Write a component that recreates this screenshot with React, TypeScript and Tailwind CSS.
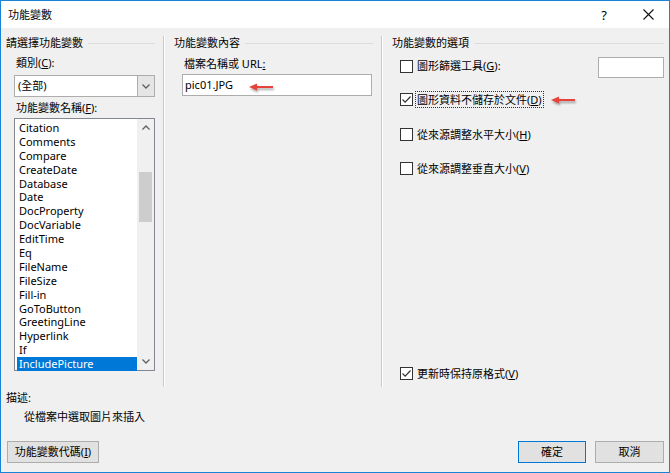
import React from 'react'

const items = [
  'Citation',
  'Comments',
  'Compare',
  'CreateDate',
  'Database',
  'Date',
  'DocProperty',
  'DocVariable',
  'EditTime',
  'Eq',
  'FileName',
  'FileSize',
  'Fill-in',
  'GoToButton',
  'GreetingLine',
  'Hyperlink',
  'If',
  'IncludePicture',
]

function GroupHeader({ title }: { title: string }) {
  return (
    <div className="flex items-center h-[14px] gap-[5px]">
      <span className="whitespace-nowrap">{title}</span>
      <div className="flex-1 h-px bg-[#dcdcdc]" />
    </div>
  )
}

function Key({ k }: { k: string }) {
  return (
    <>
      (<span className="underline underline-offset-1">{k}</span>)
    </>
  )
}

function Check({ checked }: { checked?: boolean }) {
  return (
    <div className="w-[13px] h-[13px] border border-[#333] bg-white flex items-center justify-center shrink-0">
      {checked && (
        <svg width="11" height="11" viewBox="0 0 11 11">
          <path d="M1.5 5.5 L4.2 8.2 L9.5 2.5" fill="none" stroke="#333" strokeWidth="1.2" />
        </svg>
      )}
    </div>
  )
}

function RedArrow() {
  return (
    <svg width="26" height="10" viewBox="0 0 26 10" className="drop-shadow-[1px_2px_1px_rgba(0,0,0,0.35)]">
      <path d="M7 5 H24" stroke="#e8433b" strokeWidth="2" />
      <path d="M0 5 L8 1.5 L8 8.5 Z" fill="#e8433b" />
    </svg>
  )
}

function Chevron({ up }: { up?: boolean }) {
  return (
    <svg width="8" height="5" viewBox="0 0 8 5">
      <path d={up ? 'M0.5 4.5 L4 1 L7.5 4.5' : 'M0.5 0.5 L4 4 L7.5 0.5'} fill="none" stroke="#606060" strokeWidth="1.3" />
    </svg>
  )
}

export default function App() {
  return (
    <div className="w-[670px] h-[473px] border border-[#1883d7] bg-[#f0f0f0] flex flex-col text-[11px] leading-[14px] text-black font-['Noto_Sans','Noto_Sans_CJK_TC',sans-serif]">
      {/* title bar */}
      <div className="h-[27px] bg-white flex items-center pl-[7px] pr-[15px] shrink-0">
        <span className="text-[11px]">功能變數</span>
        <div className="flex-1" />
        <span className="text-[13px] mr-[36px]">?</span>
        <svg width="11" height="11" viewBox="0 0 11 11">
          <path d="M0.5 0.5 L10.5 10.5 M10.5 0.5 L0.5 10.5" stroke="#111" strokeWidth="1.1" />
        </svg>
      </div>

      {/* columns */}
      <div className="flex h-[359px] pt-[8px] shrink-0">
        {/* left */}
        <div className="w-[162px] pl-[5px] pr-[8px] flex flex-col">
          <GroupHeader title="請選擇功能變數" />
          <div className="mt-[6px] ml-[10px]">
            類別<Key k="C" />:
          </div>
          <div className="mt-[5px] ml-[8px] h-[22px] border border-[#adadad] bg-white flex">
            <div className="flex-1 pl-[3px] flex items-center">(全部)</div>
            <div className="w-[17px] bg-[#e5e5e5] border-l border-[#adadad] flex items-center justify-center">
              <Chevron />
            </div>
          </div>
          <div className="mt-[4px] ml-[10px]">
            功能變數名稱<Key k="F" />:
          </div>
          <div className="mt-[3px] ml-[8px] h-[253px] border border-[#828790] bg-white flex">
            <div className="flex-1 pt-[2px] pl-[2px]">
              {items.map(it => (
                <div
                  key={it}
                  className={`h-[13.9px] leading-[13.9px] pl-[2px] ${it === 'IncludePicture' ? 'bg-[#0078d7] text-white' : ''}`}
                >
                  {it}
                </div>
              ))}
            </div>
            <div className="w-[17px] bg-[#f0f0f0] flex flex-col items-center">
              <div className="h-[17px] flex items-center justify-center">
                <Chevron up />
              </div>
              <div className="mt-[36px] w-[13px] h-[50px] bg-[#cdcdcd]" />
              <div className="flex-1" />
              <div className="h-[17px] flex items-center justify-center">
                <Chevron />
              </div>
            </div>
          </div>
        </div>

        <div className="w-px bg-[#c9c9c9]" />
        <div className="w-px bg-white" />

        {/* middle */}
        <div className="w-[216px] pl-[9px] pr-[8px] flex flex-col">
          <GroupHeader title="功能變數內容" />
          <div className="mt-[7px] ml-[10px]">
            檔案名稱或 URL<span className="underline underline-offset-1">:</span>
          </div>
          <div className="relative mt-[3px] ml-[8px] w-[190px] h-[22px] border border-[#adadad] bg-white flex items-center pl-[2px]">
            pic01.JPG
            <div className="absolute left-[66px] top-[7px] flex">
              <RedArrow />
            </div>
          </div>
        </div>

        <div className="w-px bg-[#c9c9c9]" />
        <div className="w-px bg-white" />

        {/* right */}
        <div className="flex-1 pl-[9px] pr-[5px] flex flex-col">
          <GroupHeader title="功能變數的選項" />
          <div className="mt-[7px] h-[21px] flex items-start pl-[8px]">
            <div className="mt-[3px]">
              <Check />
            </div>
            <span className="ml-[4px] mt-[2px]">
              圖形篩選工具<Key k="G" />:
            </span>
            <div className="flex-1" />
            <div className="w-[66px] h-[21px] border border-[#adadad] bg-white" />
          </div>
          <div className="mt-[13px] h-[17px] flex items-center pl-[8px]">
            <Check checked />
            <span className="ml-[2px] px-[1px] h-[17px] flex items-center border border-dotted border-[#333]">
              圖形資料不儲存於文件<Key k="D" />
            </span>
            <div className="ml-[7px] flex">
              <RedArrow />
            </div>
          </div>
          <div className="mt-[18px] h-[17px] flex items-center pl-[8px]">
            <Check />
            <span className="ml-[4px]">
              從來源調整水平大小<Key k="H" />
            </span>
          </div>
          <div className="mt-[17px] h-[17px] flex items-center pl-[8px]">
            <Check />
            <span className="ml-[4px]">
              從來源調整垂直大小<Key k="V" />
            </span>
          </div>
          <div className="flex-1" />
          <div className="mb-[5px] h-[17px] flex items-center pl-[8px]">
            <Check checked />
            <span className="ml-[4px]">
              更新時保持原格式<Key k="V" />
            </span>
          </div>
        </div>
      </div>

      {/* description */}
      <div className="mt-[4px] pl-[5px]">描述:</div>
      <div className="mt-[5px] pl-[23px]">從檔案中選取圖片來插入</div>

      <div className="flex-1" />
      {/* buttons */}
      <div className="flex items-center pl-[6px] pr-[5px] pb-[9px]">
        <button className="w-[92px] h-[22px] bg-[#e1e1e1] border border-[#adadad] flex items-center justify-center">
          功能變數代碼<Key k="I" />
        </button>
        <div className="flex-1" />
        <button className="w-[68px] h-[22px] bg-[#e1e1e1] border border-[#0078d7] flex items-center justify-center">
          確定
        </button>
        <button className="ml-[9px] w-[69px] h-[22px] bg-[#e1e1e1] border border-[#adadad] flex items-center justify-center">
          取消
        </button>
      </div>
    </div>
  )
}
